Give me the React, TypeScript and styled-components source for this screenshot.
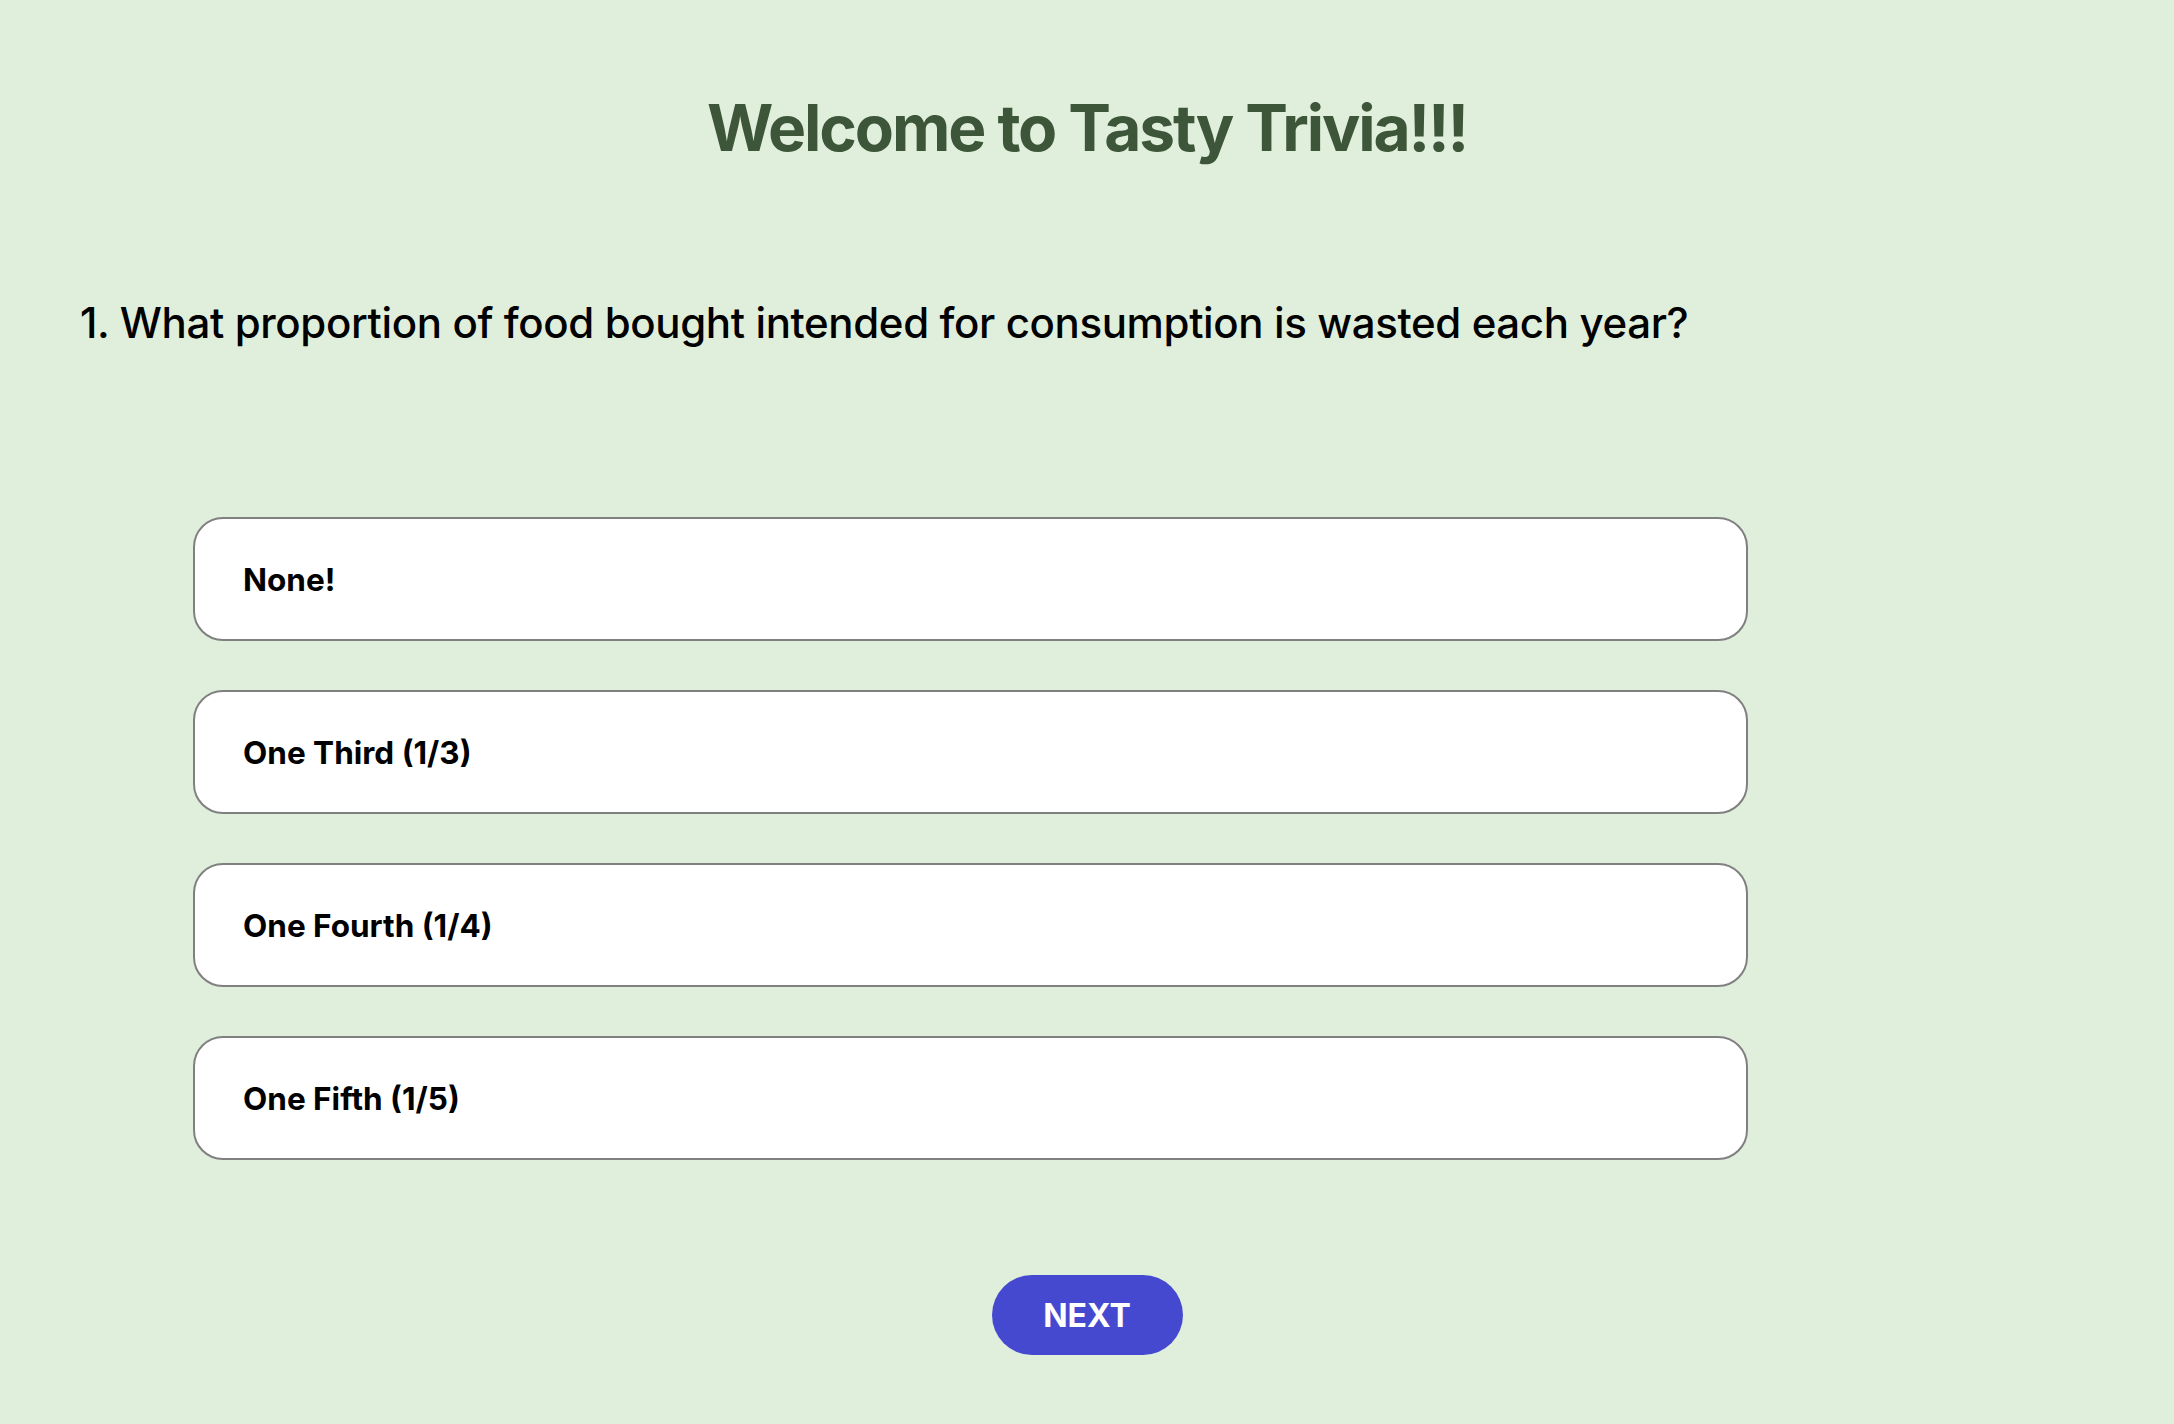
import React, {useState} from "react";
import styled, {createGlobalStyle} from "styled-components";

const options = ["None!", "One Third (1/3)", "One Fourth (1/4)", "One Fifth (1/5)"]

export default function App() {
    const [picked, setPicked] = useState<number | null>(null)
    return (
        <>
            <GlobalStyle/>
            <Page>
                <Title>Welcome to Tasty Trivia!!!</Title>
                <Question>1. What proportion of food bought intended for consumption is wasted each year?</Question>
                <OptionList>
                    {options.map((o, i) => (
                        <Option key={o} selected={picked === i} onClick={() => setPicked(i)}>
                            {o}
                        </Option>
                    ))}
                </OptionList>
                <Footer>
                    <NextButton>NEXT</NextButton>
                </Footer>
            </Page>
        </>
    )
}

const GlobalStyle = createGlobalStyle`
  html, body {
    margin: 0;
    padding: 0;
    background: #e0eedc;
  }
  body {
    font-family: Inter, "Liberation Sans", sans-serif;
  }
`

const Page = styled.div`
  min-height: 1424px;
  box-sizing: border-box;
  padding: 89px 80px 0;
`

const Title = styled.h1`
  margin: 0;
  text-align: center;
  font-size: 64px;
  font-weight: 700;
  line-height: 78px;
  letter-spacing: -2.1px;
  color: #3d5538;
`

const Question = styled.h2`
  margin: 130px 0 0;
  font-size: 42px;
  font-weight: 500;
  line-height: 51px;
  letter-spacing: -0.37px;
  color: #000;
`

const OptionList = styled.div`
  display: flex;
  flex-direction: column;
  gap: 49px;
  margin: 169px 0 0 113px;
  width: 1555px;
`

const Option = styled.div<{ selected: boolean }>`
  box-sizing: border-box;
  height: 124px;
  display: flex;
  align-items: center;
  padding: 0 48px;
  background: ${p => p.selected ? "#f2f2f2" : "#fff"};
  border: 2px solid #808080;
  border-radius: 30px;
  font-size: 31.5px;
  font-weight: 700;
  color: #000;
  cursor: pointer;
`

const Footer = styled.div`
  display: flex;
  justify-content: center;
  margin: 115px -80px 0;
`

const NextButton = styled.button`
  width: 191px;
  height: 80px;
  border: none;
  border-radius: 40px;
  background: #4549d0;
  color: #fff;
  font-family: Inter, "Liberation Sans", sans-serif;
  font-size: 32px;
  font-weight: 700;
  cursor: pointer;
`
